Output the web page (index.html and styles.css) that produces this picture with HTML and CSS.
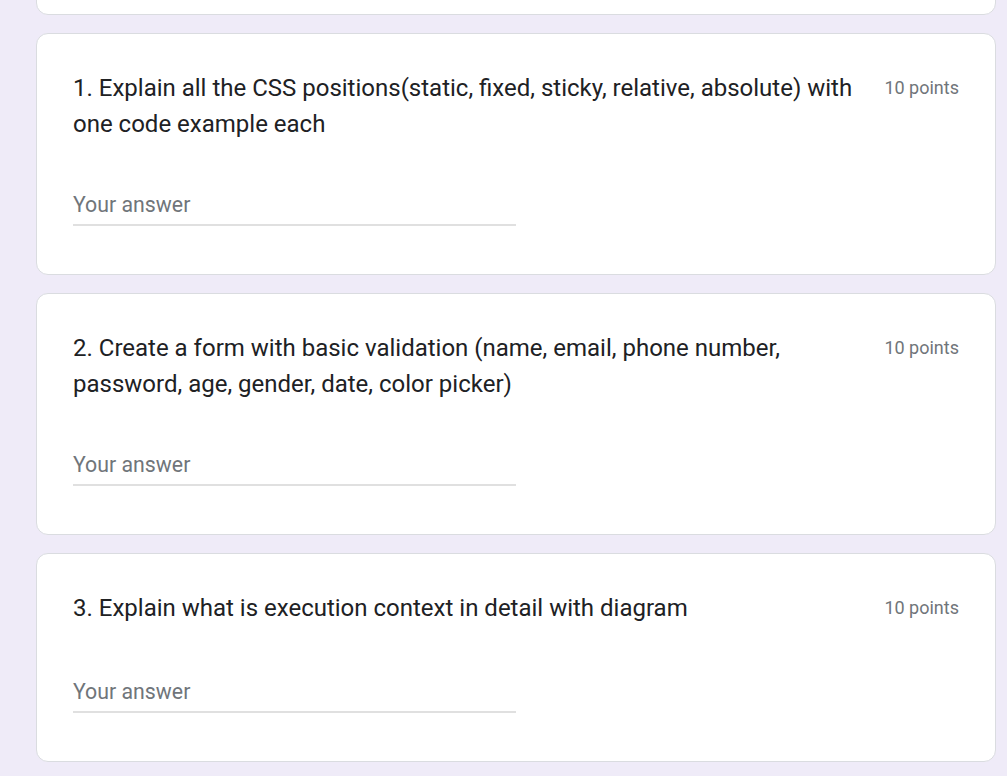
FILE: index.html
```html
<!DOCTYPE html>
<html>
<head>
<meta charset="utf-8">
<link rel="stylesheet" href="styles.css">
</head>
<body>
<main class="form">
  <div class="card card-partial"></div>

  <section class="card">
    <div class="q-header">
      <div class="q-title">1. Explain all the CSS positions(static, fixed, sticky, relative, absolute) with one code example each</div>
      <div class="q-points">10 points</div>
    </div>
    <div class="q-answer">Your answer</div>
  </section>

  <section class="card">
    <div class="q-header">
      <div class="q-title">2. Create a form with basic validation (name, email, phone number, password, age, gender, date, color picker)</div>
      <div class="q-points">10 points</div>
    </div>
    <div class="q-answer">Your answer</div>
  </section>

  <section class="card">
    <div class="q-header">
      <div class="q-title">3. Explain what is execution context in detail with diagram</div>
      <div class="q-points">10 points</div>
    </div>
    <div class="q-answer">Your answer</div>
  </section>
</main>
</body>
</html>
```

FILE: styles.css
```css
html, body {
  margin: 0;
  padding: 0;
  background: #efebf8;
  height: 100%;
  overflow: hidden;
}

body {
  font-family: Roboto, "Liberation Sans", Arial, sans-serif;
  color: #202124;
}

.form {
  width: 960px;
  margin-left: 36px;
  display: flex;
  flex-direction: column;
  gap: 18px;
}

.card {
  box-sizing: border-box;
  background: #ffffff;
  border: 1px solid #dadce0;
  border-radius: 12px;
  padding: 36px;
}

.card-partial {
  height: 60px;
  margin-top: -45px;
  padding: 0;
}

.q-header {
  display: flex;
  align-items: flex-start;
}

.q-title {
  flex: 1;
  font-size: 24px;
  line-height: 36px;
  color: #202124;
}

.q-points {
  margin-left: 24px;
  font-size: 18px;
  line-height: 36px;
  height: 39px;
  color: #70757a;
  white-space: nowrap;
}

.q-answer {
  width: 443px;
  height: 30px;
  margin-top: 48px;
  margin-bottom: 12px;
  padding-bottom: 4px;
  border-bottom: 2px solid #e0e0e0;
  font-size: 21.3px;
  line-height: 30px;
  color: #70757a;
}
```
